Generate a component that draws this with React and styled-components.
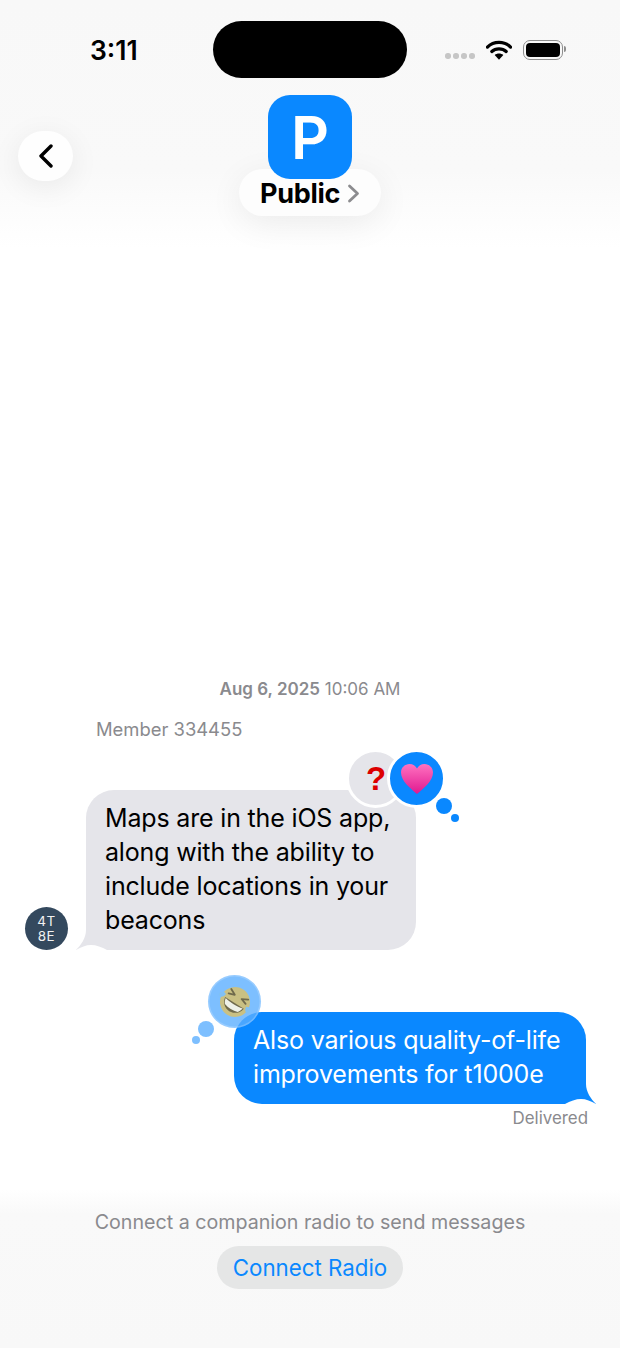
import React from 'react'
import styled, { createGlobalStyle } from 'styled-components'

const GlobalStyle = createGlobalStyle`
  html, body { margin: 0; padding: 0; background: #fff; }
  body { font-family: Inter, "Noto Sans", sans-serif; -webkit-font-smoothing: antialiased; }
`

const Tail = ({ color, flip }) => (
  <TailSvg $flip={flip} width="40" height="30" viewBox="0 0 40 30">
    <path d="M10 0 L10 10 C10 18 5 25 0 30 L40 30 L40 0 Z" fill={color} />
    <path d="M0 30 C5 27 10 25 15 25 C20 25 26 27 31 30 Z" fill="#fff" />
  </TailSvg>
)

const Heart = () => (
  <svg width="34" height="32" viewBox="0 0 34 32">
    <defs>
      <linearGradient id="heartFill" x1="0" y1="0" x2="0" y2="1">
        <stop offset="0" stopColor="#ff72c0" />
        <stop offset="1" stopColor="#e0188f" />
      </linearGradient>
    </defs>
    <path d="M17 31 C10 25 1 18 1 9.5 C1 4.5 5 1 9.5 1 C13 1 15.6 3 17 5.6 C18.4 3 21 1 24.5 1 C29 1 33 4.5 33 9.5 C33 18 24 25 17 31 Z" fill="url(#heartFill)" />
  </svg>
)

const LaughFace = () => (
  <svg width="36" height="36" viewBox="0 0 36 36">
    <g transform="rotate(32 18 18)">
      <circle cx="18" cy="18" r="15" fill="#c9c083" />
      <path d="M7 19 C9 32 27 32 29 19 Z" fill="#6f6a4c" />
      <path d="M8 19.500 C14 21 22 21 28 19.500 C27.500 22 26.500 24 25.500 25 C21 26.500 15 26.500 10.500 25 C9.500 24 8.500 22 8 19.500 Z" fill="#eef1e8" />
      <path d="M8 9 L14 12 L8 14 M28 9 L22 12 L28 14" fill="none" stroke="#6f6a4c" strokeWidth="1.800" strokeLinecap="round" strokeLinejoin="round" />
      <path d="M3 15 C0 17 -1 20 1 21 C4 22 6 19 6 16 Z M33 15 C36 17 37 20 35 21 C32 22 30 19 30 16 Z" fill="#7fc0f5" />
    </g>
  </svg>
)

export default function App() {
  return (
    <Page>
      <GlobalStyle />
      <Header>
        <StatusBar>
          <Time>3:11</Time>
          <Island />
          <StatusIcons>
            <SignalDots>
              <i /><i /><i /><i />
            </SignalDots>
            <svg width="26" height="20" viewBox="0 0 27 20">
              <path d="M1.500 7 C8 0.500 19 0.500 25.500 7" fill="none" stroke="#000" strokeWidth="3.400" strokeLinecap="round" />
              <path d="M6 11.500 C10 7.800 17 7.800 21 11.500" fill="none" stroke="#000" strokeWidth="3.400" strokeLinecap="round" />
              <path d="M13.500 20 L9 15.300 C11.500 13.200 15.500 13.200 18 15.300 Z" fill="#000" />
            </svg>
            <Battery>
              <BatteryFill />
              <BatteryCap />
            </Battery>
          </StatusIcons>
        </StatusBar>
        <NavRow>
          <BackButton>
            <svg width="16" height="24" viewBox="0 0 16 24">
              <path d="M13 2 L3 12 L13 22" fill="none" stroke="#000" strokeWidth="3.400" strokeLinecap="round" strokeLinejoin="round" />
            </svg>
          </BackButton>
          <TitleBlock>
            <ChannelAvatar>P</ChannelAvatar>
            <TitlePill>
              Public
              <svg width="13" height="19" viewBox="0 0 13 19">
                <path d="M2.500 2 L10.500 9.500 L2.500 17" fill="none" stroke="#8c8c8f" strokeWidth="2.800" strokeLinecap="round" strokeLinejoin="round" />
              </svg>
            </TitlePill>
          </TitleBlock>
        </NavRow>
      </Header>

      <Thread>
        <DateLine><b>Aug 6, 2025</b> 10:06 AM</DateLine>
        <SenderName>Member 334455</SenderName>
        <IncomingRow>
          <SenderAvatar>4T<br />8E</SenderAvatar>
          <Bubble $incoming>
            <Tail color="#e5e5ea" />
            <BubbleText>Maps are in the iOS app, along with the ability to include locations in your beacons</BubbleText>
            <ReactionGroup>
              <Reaction $bg="#e5e5ea"><Question>?</Question></Reaction>
              <Reaction $bg="#0a88ff" $overlap><Heart /></Reaction>
              <BigDot $bg="#0a88ff" />
              <SmallDot $bg="#0a88ff" />
            </ReactionGroup>
          </Bubble>
        </IncomingRow>
        <OutgoingRow>
          <Bubble>
            <Tail color="#0a88ff" flip />
            <BubbleText>Also various quality-of-life improvements for t1000e</BubbleText>
            <OwnReaction><LaughFace /></OwnReaction>
            <OwnBigDot />
            <OwnSmallDot />
          </Bubble>
          <Delivered>Delivered</Delivered>
        </OutgoingRow>
      </Thread>

      <Footer>
        <FooterText>Connect a companion radio to send messages</FooterText>
        <ConnectButton>Connect Radio</ConnectButton>
      </Footer>
    </Page>
  )
}

const Page = styled.div`
  width: 620px;
  height: 1348px;
  display: flex;
  flex-direction: column;
  overflow: hidden;
  background: #fff;
`

const Header = styled.header`
  height: 248px;
  padding-top: 21px;
  box-sizing: border-box;
  background: linear-gradient(#f8f8f8 0, #f9f9f9 170px, #fff 248px);
`

const StatusBar = styled.div`
  height: 57px;
  display: grid;
  grid-template-columns: 1fr 194px 1fr;
  align-items: center;
`

const Time = styled.div`
  justify-self: start;
  margin-left: 90px;
  font-size: 26.500px;
  font-weight: 600;
  color: #000;
`

const Island = styled.div`
  height: 57px;
  border-radius: 29px;
  background: #000;
`

const StatusIcons = styled.div`
  display: flex;
  align-items: center;
  margin-left: 38px;
  gap: 11px;
`

const SignalDots = styled.div`
  display: flex;
  gap: 2.5px;
  margin-top: 13px;

  i {
    width: 5.500px;
    height: 5.500px;
    border-radius: 50%;
    background: #c6c6c6;
  }
`

const Battery = styled.div`
  position: relative;
  width: 40px;
  height: 20px;
  box-sizing: border-box;
  padding: 2px;
  border: 1.500px solid #8e8e8e;
  border-radius: 7px;
`

const BatteryFill = styled.div`
  width: 100%;
  height: 100%;
  border-radius: 4px;
  background: #000;
`

const BatteryCap = styled.div`
  position: absolute;
  right: -4.500px;
  top: 5px;
  width: 2px;
  height: 6px;
  border-radius: 0 2px 2px 0;
  background: #8e8e8e;
`

const NavRow = styled.div`
  display: grid;
  grid-template-columns: 1fr auto 1fr;
  margin-top: 17px;
  padding: 0 18px;
`

const BackButton = styled.button`
  justify-self: start;
  width: 55px;
  height: 50px;
  margin-top: 36px;
  padding: 0;
  display: flex;
  align-items: center;
  justify-content: center;
  border: none;
  border-radius: 25px;
  background: #fefefe;
  box-shadow: 0 6px 30px rgba(0, 0, 0, 0.07);
`

const TitleBlock = styled.div`
  display: flex;
  flex-direction: column;
  align-items: center;
`

const ChannelAvatar = styled.div`
  position: relative;
  z-index: 1;
  width: 84px;
  height: 84px;
  display: flex;
  align-items: center;
  justify-content: center;
  border-radius: 22px;
  background: #0a88ff;
  color: #fff;
  font-size: 59px;
  font-weight: 600;
`

const TitlePill = styled.div`
  width: 142px;
  height: 47px;
  margin-top: -10px;
  box-sizing: border-box;
  padding-top: 1px;
  display: flex;
  align-items: center;
  justify-content: center;
  gap: 7px;
  border-radius: 24px;
  background: #fdfdfd;
  box-shadow: 0 8px 34px rgba(0, 0, 0, 0.07);
  color: #000;
  font-size: 27px;
  font-weight: 700;
  letter-spacing: -0.3px;
`

const Thread = styled.main`
  flex: 1;
  display: flex;
  flex-direction: column;
  justify-content: flex-end;
  padding-bottom: 61px;
`

const DateLine = styled.div`
  text-align: center;
  font-size: 17px;
  line-height: 22px;
  color: #8a8a8e;

  b {
    font-weight: 600;
  }
`

const SenderName = styled.div`
  margin: 18px 0 0 96px;
  font-size: 18.400px;
  line-height: 22px;
  color: #8a8a8e;
`

const IncomingRow = styled.div`
  margin-top: 50px;
  padding-left: 25px;
  display: flex;
  align-items: flex-end;
  gap: 18px;
`

const SenderAvatar = styled.div`
  width: 43px;
  height: 43px;
  display: flex;
  align-items: center;
  justify-content: center;
  text-align: center;
  border-radius: 50%;
  background: #34495e;
  color: #f2f2f2;
  font-size: 13.500px;
  line-height: 14.500px;
  font-weight: 400;
  letter-spacing: 0.5px;
`

const Bubble = styled.div`
  position: relative;
  box-sizing: border-box;
  width: ${(p) => (p.$incoming ? '330px' : '352px')};
  padding: 11px 20px 13px 19px;
  border-radius: 28px;
  background: ${(p) => (p.$incoming ? '#e5e5ea' : '#0a88ff')};
  color: ${(p) => (p.$incoming ? '#000' : '#fff')};
  font-size: 25px;
  line-height: 34px;
  letter-spacing: -0.17px;
`

const BubbleText = styled.div`
  position: relative;
`

const TailSvg = styled.svg`
  position: absolute;
  bottom: 0;
  ${(p) => (p.$flip ? 'right: -10px; transform: scaleX(-1);' : 'left: -10px;')}
`

const ReactionGroup = styled.div`
  position: absolute;
  top: -41px;
  right: -30px;
  display: flex;
`

const Reaction = styled.div`
  width: 53px;
  height: 53px;
  display: flex;
  align-items: center;
  justify-content: center;
  border: 3px solid #fff;
  border-radius: 50%;
  background: ${(p) => p.$bg};
  ${(p) => p.$overlap && 'margin-left: -18px; position: relative;'}
`

const Question = styled.span`
  margin-left: 1px;
  color: #dc0000;
  font-family: "Liberation Sans", sans-serif;
  font-size: 33px;
  font-weight: 700;
  line-height: 1;
`

const BigDot = styled.div`
  position: absolute;
  left: 90px;
  top: 49px;
  width: 16px;
  height: 16px;
  border-radius: 50%;
  background: ${(p) => p.$bg};
`

const SmallDot = styled.div`
  position: absolute;
  left: 105px;
  top: 65px;
  width: 8px;
  height: 8px;
  border-radius: 50%;
  background: ${(p) => p.$bg};
`

const OutgoingRow = styled.div`
  margin-top: 62px;
  padding-right: 34px;
  display: flex;
  flex-direction: column;
  align-items: flex-end;
`

const OwnReaction = styled.div`
  position: absolute;
  left: -26px;
  top: -37px;
  width: 53px;
  height: 53px;
  box-sizing: border-box;
  display: flex;
  align-items: center;
  justify-content: center;
  border-radius: 50%;
  background: rgba(90, 174, 255, 0.79);
  box-shadow: inset 0 0 0 1.500px rgba(255, 255, 255, 0.2);
`

const OwnBigDot = styled.div`
  position: absolute;
  left: -36px;
  top: 9px;
  width: 16px;
  height: 16px;
  border-radius: 50%;
  background: #7dbfff;
`

const OwnSmallDot = styled.div`
  position: absolute;
  left: -42px;
  top: 24px;
  width: 8px;
  height: 8px;
  border-radius: 50%;
  background: #7dbfff;
`

const Delivered = styled.div`
  margin: 3px -2px 0 0;
  font-size: 16.900px;
  line-height: 22px;
  color: #8a8a8e;
`

const Footer = styled.footer`
  height: 158px;
  box-sizing: border-box;
  padding-top: 18px;
  display: flex;
  flex-direction: column;
  align-items: center;
  background: linear-gradient(#fff 0, #f9f9f9 24px, #f8f8f8 100%);
`

const FooterText = styled.div`
  font-size: 19.650px;
  line-height: 28px;
  color: #8a8a8e;
`

const ConnectButton = styled.button`
  width: 186px;
  height: 43px;
  margin-top: 10px;
  padding: 0;
  border: none;
  border-radius: 22px;
  background: #e5e6e6;
  color: #0a88ff;
  font-family: inherit;
  font-size: 22.300px;
`
